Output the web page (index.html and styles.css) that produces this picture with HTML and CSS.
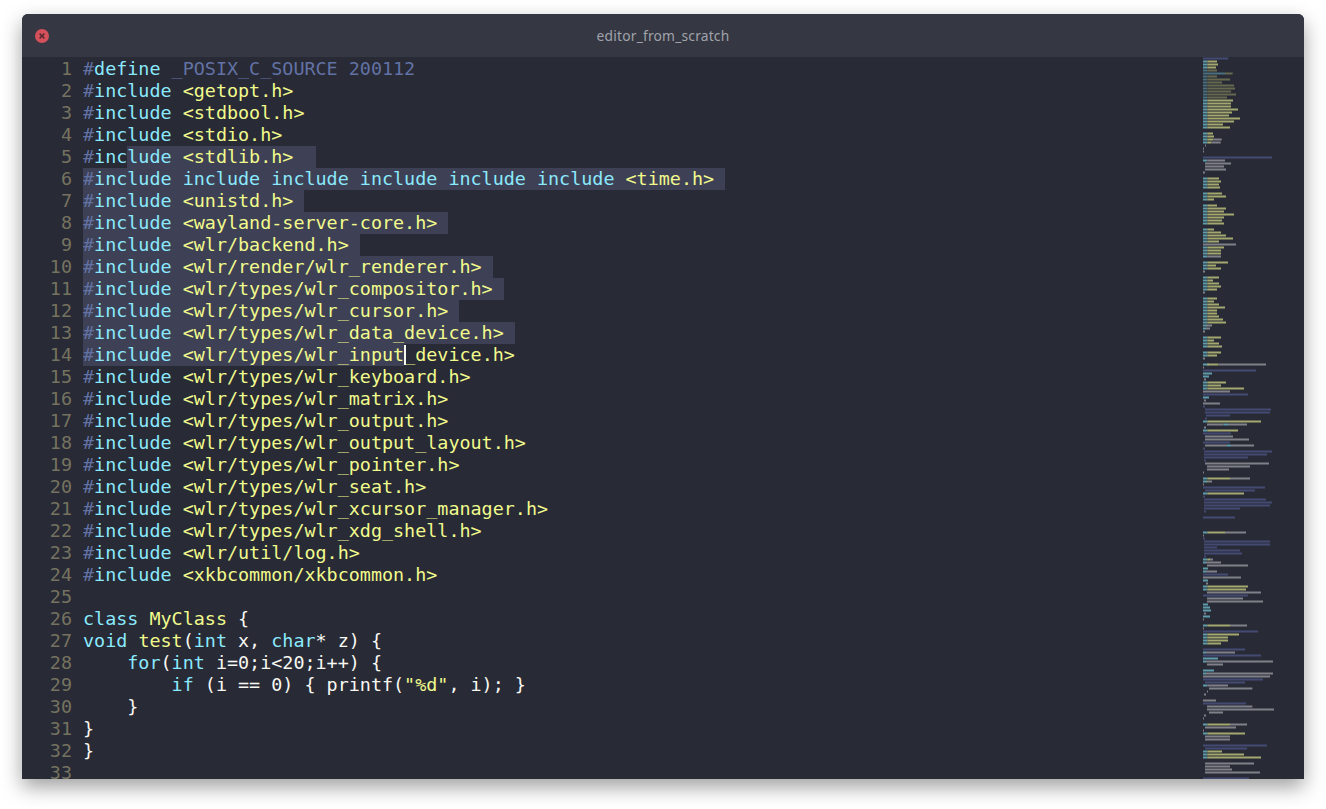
FILE: index.html
```html
<!DOCTYPE html>
<html lang="en">
<head>
<meta charset="utf-8">
<title>editor_from_scratch</title>
<link rel="stylesheet" href="styles.css">
</head>
<body>
<main class="window">
  <header class="titlebar">
    <svg class="close" viewBox="0 0 14 14" aria-hidden="true"><circle cx="7" cy="7" r="7"/><path d="M4.6 4.6l4.8 4.8M9.4 4.6l-4.8 4.8"/></svg>
    <div class="title">editor_from_scratch</div>
  </header>
  <section class="editor">
    <div class="gutter">
      <div>1</div><div>2</div><div>3</div><div>4</div><div>5</div><div>6</div><div>7</div><div>8</div><div>9</div><div>10</div><div>11</div><div>12</div><div>13</div><div>14</div><div>15</div><div>16</div><div>17</div><div>18</div><div>19</div><div>20</div><div>21</div><div>22</div><div>23</div><div>24</div><div>25</div><div>26</div><div>27</div><div>28</div><div>29</div><div>30</div><div>31</div><div>32</div><div>33</div>
    </div>
    <div class="code">
      <div class="line"><i>#</i><b>define</b> <i>_POSIX_C_SOURCE 200112</i></div>
      <div class="line"><i>#</i><b>include</b> <u>&lt;getopt.h&gt;</u></div>
      <div class="line"><i>#</i><b>include</b> <u>&lt;stdbool.h&gt;</u></div>
      <div class="line"><i>#</i><b>include</b> <u>&lt;stdio.h&gt;</u></div>
      <div class="line"><i>#</i><b>inc</b><span class="sel"><b>lude</b> <u>&lt;stdlib.h&gt;</u>  </span></div>
      <div class="line"><span class="sel"><i>#</i><b>include include include include include include</b> <u>&lt;time.h&gt;</u> </span></div>
      <div class="line"><span class="sel"><i>#</i><b>include</b> <u>&lt;unistd.h&gt;</u> </span></div>
      <div class="line"><span class="sel"><i>#</i><b>include</b> <u>&lt;wayland-server-core.h&gt;</u> </span></div>
      <div class="line"><span class="sel"><i>#</i><b>include</b> <u>&lt;wlr/backend.h&gt;</u> </span></div>
      <div class="line"><span class="sel"><i>#</i><b>include</b> <u>&lt;wlr/render/wlr_renderer.h&gt;</u> </span></div>
      <div class="line"><span class="sel"><i>#</i><b>include</b> <u>&lt;wlr/types/wlr_compositor.h&gt;</u> </span></div>
      <div class="line"><span class="sel"><i>#</i><b>include</b> <u>&lt;wlr/types/wlr_cursor.h&gt;</u> </span></div>
      <div class="line"><span class="sel"><i>#</i><b>include</b> <u>&lt;wlr/types/wlr_data_device.h&gt;</u> </span></div>
      <div class="line"><span class="sel"><i>#</i><b>include</b> <u>&lt;wlr/types/wlr_input</u></span><span class="caret"></span><u>_device.h&gt;</u></div>
      <div class="line"><i>#</i><b>include</b> <u>&lt;wlr/types/wlr_keyboard.h&gt;</u></div>
      <div class="line"><i>#</i><b>include</b> <u>&lt;wlr/types/wlr_matrix.h&gt;</u></div>
      <div class="line"><i>#</i><b>include</b> <u>&lt;wlr/types/wlr_output.h&gt;</u></div>
      <div class="line"><i>#</i><b>include</b> <u>&lt;wlr/types/wlr_output_layout.h&gt;</u></div>
      <div class="line"><i>#</i><b>include</b> <u>&lt;wlr/types/wlr_pointer.h&gt;</u></div>
      <div class="line"><i>#</i><b>include</b> <u>&lt;wlr/types/wlr_seat.h&gt;</u></div>
      <div class="line"><i>#</i><b>include</b> <u>&lt;wlr/types/wlr_xcursor_manager.h&gt;</u></div>
      <div class="line"><i>#</i><b>include</b> <u>&lt;wlr/types/wlr_xdg_shell.h&gt;</u></div>
      <div class="line"><i>#</i><b>include</b> <u>&lt;wlr/util/log.h&gt;</u></div>
      <div class="line"><i>#</i><b>include</b> <u>&lt;xkbcommon/xkbcommon.h&gt;</u></div>
      <div class="line"> </div>
      <div class="line"><b>class</b> <u>MyClass</u> {</div>
      <div class="line"><b>void</b> <u>test</u>(<b>int</b> x, <b>char</b>* z) {</div>
      <div class="line">    <b>for</b>(<b>int</b> i=0;i&lt;20;i++) {</div>
      <div class="line">        <b>if</b> (i == 0) { printf(<u>"%d"</u>, i); }</div>
      <div class="line">    }</div>
      <div class="line">}</div>
      <div class="line">}</div>
      <div class="line"> </div>
    </div>
    <svg class="minimap" viewBox="39 0 303 241" preserveAspectRatio="none" aria-hidden="true">
      <g transform="translate(0 .5)">
        <path class="mb" d="M39 0H115M39 33H246M39 104H198M39 112H174M39 116H45M45 117H243M45 118H240M48 119H120M45 120H51M39 125H123M39 128H120M39 130H45M42 131H246M42 132H231M42 133H174M42 134H48M39 143H225M45 144H195M39 146H45M42 147H228M42 148H246M42 149H240M42 150H150M42 151H48M39 153H135M39 160H45M42 161H240M42 162H240M42 163H81M42 164H150M42 165H156M42 166H48M39 172H114M39 179H174M39 191H204M39 197H165M39 199H213M39 207H219M45 208H165M39 215H168M39 229H231M45 230H171M39 240H177"/>
        <path class="mc" d="M39 1H52M39 2H52M39 3H52M39 14H52M39 15H52M39 16H52M39 17H52M39 18H52M39 19H52M39 20H52M39 21H52M39 22H52M39 23H52M39 25H52M39 26H52M39 27H52M39 28H52M39 34H52M39 40H52M39 41H52M39 42H52M39 43H52M39 45H52M39 46H52M39 47H52M39 49H52M39 50H52M39 51H52M39 52H52M39 53H52M39 54H52M39 55H52M39 57H52M39 58H52M39 59H52M39 60H52M39 61H52M39 63H52M39 64H52M39 65H52M39 66H52M39 68H52M39 69H52M39 70H52M39 73H52M39 74H52M39 75H52M39 76H52M39 77H52M39 80H52M39 81H52M39 82H52M39 83H52M39 84H52M39 85H52M39 86H52M39 87H52M39 88H52M39 89H52M39 90H48M39 93H52M39 94H52M39 95H52M39 96H52M39 98H52M39 99H52M39 102H57M39 105H66M39 106H57M39 108H52M39 109H52M39 110H52M39 113H57M39 121H52M39 124H52M100 122H114M111 129H123M39 140H52M39 141H52M39 145H52M39 158H52M39 167H52M39 168H48M39 170H54M39 171H48M39 174H54M39 176H52M39 177H52M39 182H54M39 183H60M39 184H63M39 186H60M39 189H52M39 192H52M39 193H52M39 194H52M39 195H52M39 198H48M39 200H84M39 201H48M39 204H72M39 205H48M39 209H52M39 222H52M39 225H52M39 231H52M39 232H52M39 233H52"/>
        <path class="my" d="M52 1H81M52 2H84M52 3H78M52 14H129M52 15H123M52 16H123M52 17H144M52 18H126M52 19H117M52 20H150M52 21H132M52 22H99M52 23H120M52 25H69M52 26H72M52 27H70M52 28H64M52 40H87M52 41H93M52 42H87M52 43H90M52 45H96M52 46H108M52 47H72M52 49H81M52 50H108M52 51H102M52 52H132M52 53H102M52 54H96M52 55H102M52 57H72M52 58H93M52 59H108M52 60H129M52 61H87M52 63H102M52 64H93M52 65H93M52 68H114M52 69H78M52 70H93M52 73H87M52 74H69M52 75H87M52 76H93M52 77H81M52 80H81M52 81H72M52 82H87M52 83H105M52 84H81M52 85H81M52 86H87M52 87H99M52 88H108M52 93H93M52 94H72M52 95H87M52 96H96M52 98H93M52 99H81M52 102H85M52 108H108M52 109H93M52 110H162M52 121H213M52 124H144M52 140H120M52 141H56M52 145H162M52 158H105M52 167H60M52 176H174M52 177H168M52 189H120M52 192H147M52 193H114M52 194H114M52 195H93M52 222H120M52 225H165M52 231H96M52 232H162M52 233H213"/>
        <path class="mg" d="M70 27H95M64 28H92M45 29H48M39 30H42M39 31H42M52 34H105M45 35H123M45 36H102M45 37H108M39 38H45M39 62H138M52 66H93M39 71H45M39 78H45M48 89H66M48 90H60M39 91H45M39 100H45M85 102H228M39 103H42M42 107H48M39 111H120M42 114H48M39 115H90M51 122H100M114 122H171M42 123H48M45 126H129M45 127H177M45 129H111M123 129H192M45 135H237M51 136H180M51 137H117M39 138H42M120 140H180M56 141H66M39 142H42M105 158H168M39 159H42M60 167H69M48 168H93M51 169H174M48 171H81M39 173H153M48 175H54M51 178H213M51 180H159M51 181H219M42 185H48M39 187H42M120 189H171M39 190H42M48 198H135M48 201H249M51 202H99M48 205H249M39 206H240M52 209H114M57 210H187M51 211H54M42 212H48M39 214H78M51 216H187M51 217H252M57 218H99M42 219H48M39 220H42M120 222H171M45 223H138M39 224H42M45 226H120M45 227H120M45 235H192M45 236H120M45 237H126M45 238H210"/>
        <path class="mdc" d="M39 4H52M39 5H105M39 6H52M39 7H52M39 8H52M39 9H52M39 10H52M39 11H52M39 12H52M39 13H52"/>
        <path class="mdy" d="M52 4H81M105 5H128M52 6H81M52 7H120M52 8H96M52 9H132M52 10H135M52 11H123M52 12H138M52 13H111"/>
      </g>
    </svg>
  </section>
</main>
</body>
</html>
```

FILE: styles.css
```css
html, body {
  margin: 0;
  height: 100%;
  background: #fff;
  overflow: hidden;
}
body {
  box-sizing: border-box;
  padding: 14px 22px 30px;
}
.window {
  display: flex;
  flex-direction: column;
  height: 765px;
  background: #282a36;
  border-radius: 6px 6px 0 0;
  overflow: hidden;
  box-shadow: 0 8px 20px rgba(0, 0, 0, .38);
}
.titlebar {
  flex: none;
  display: grid;
  grid-template-columns: 1fr auto 1fr;
  align-items: center;
  height: 43px;
  padding: 0 13px;
  background: #353843;
}
.close {
  width: 14px;
  height: 14px;
}
.close circle {
  fill: #d4505a;
}
.close path {
  fill: none;
  stroke: #5a2a33;
  stroke-width: 1.5;
}
.title {
  padding-top: 1px;
  font: 13.8px/1 "Noto Sans", sans-serif;
  letter-spacing: .2px;
  color: #a0a3ab;
}
.editor {
  flex: 1;
  display: flex;
  min-height: 0;
  overflow: hidden;
}
.gutter, .code {
  padding-top: 1px;
  font-family: "DejaVu Sans Mono", monospace;
  font-size: 18.4px;
  line-height: 22px;
}
.gutter {
  flex: none;
  width: 50px;
  margin-right: 11px;
  text-align: right;
  color: #75735f;
}
.code {
  flex: 1;
  min-width: 0;
  overflow: hidden;
  color: #f8f8f2;
}
.line {
  height: 22px;
  white-space: pre;
}
.code b {
  font-weight: normal;
  color: #8be9fd;
}
.code i {
  font-style: normal;
  color: #6272a4;
}
.code u {
  text-decoration: none;
  color: #f1fa8c;
}
.sel {
  display: inline-block;
  height: 22px;
  vertical-align: top;
  background: #3e4155;
}
.caret {
  display: inline-block;
  position: relative;
  width: 0;
  height: 22px;
  vertical-align: top;
}
.caret::after {
  content: "";
  position: absolute;
  left: 0;
  top: 1px;
  width: 2px;
  height: 20px;
  background: #f8f8f2;
}
.minimap {
  flex: none;
  width: 101px;
  height: 723px;
  filter: blur(.35px);
}
.minimap path {
  fill: none;
  stroke-width: .68;
}
.mb { stroke: #444b72; }
.mc { stroke: #5f9cab; }
.my { stroke: #a4a86e; }
.mg { stroke: #808188; }
.mdc { stroke: #4a6f7f; }
.mdy { stroke: #666950; }
```
